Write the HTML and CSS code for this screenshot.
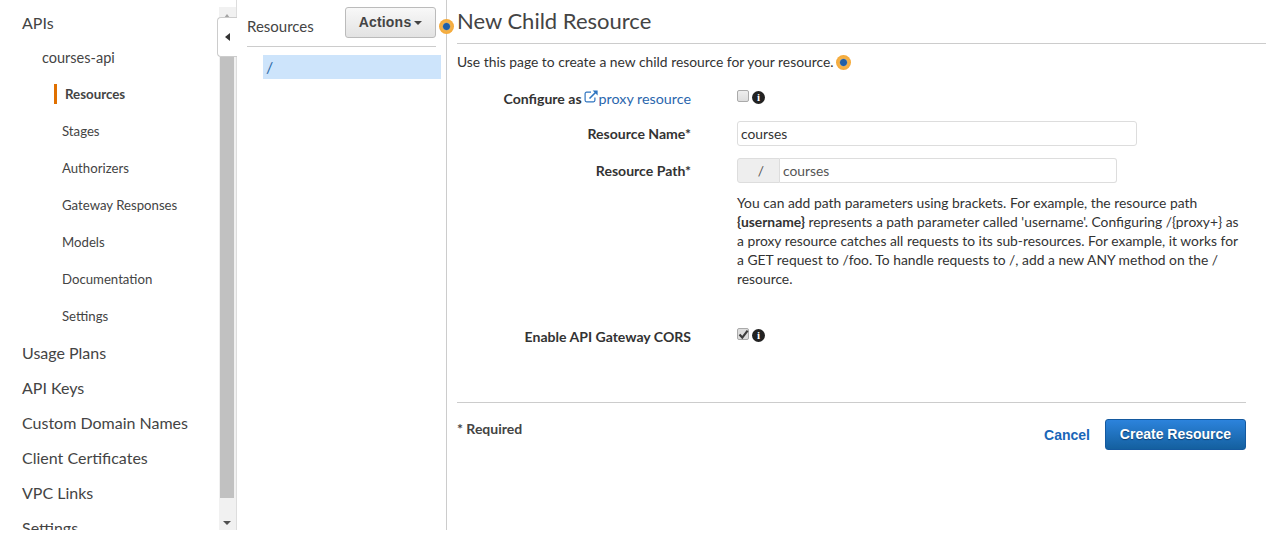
FILE: index.html
```html
<!DOCTYPE html>
<html lang="en">
<head>
<meta charset="utf-8">
<title>New Child Resource</title>
<link rel="stylesheet" href="styles.css">
</head>
<body>
<div class="app">
  <nav class="nav">
    <div class="nav-list">
      <a class="nav-top first">APIs</a>
      <a class="nav-api">courses-api</a>
      <a class="nav-sub active">Resources</a>
      <a class="nav-sub">Stages</a>
      <a class="nav-sub">Authorizers</a>
      <a class="nav-sub">Gateway Responses</a>
      <a class="nav-sub">Models</a>
      <a class="nav-sub">Documentation</a>
      <a class="nav-sub">Settings</a>
      <a class="nav-top">Usage Plans</a>
      <a class="nav-top">API Keys</a>
      <a class="nav-top">Custom Domain Names</a>
      <a class="nav-top">Client Certificates</a>
      <a class="nav-top">VPC Links</a>
      <a class="nav-top">Settings</a>
    </div>
    <div class="scrollbar">
      <div class="arrow-up"></div>
      <div class="thumb"></div>
      <div class="arrow-down"></div>
    </div>
    <button class="collapse" aria-label="Collapse"><span class="collapse-tri"></span></button>
  </nav>
  <section class="tree">
    <div class="tree-head">
      <span class="tree-title">Resources</span>
      <button class="actions">Actions<span class="caret"></span></button>
    </div>
    <div class="tree-row">/</div>
    <span class="dot dot-actions"></span>
  </section>
  <main class="main">
    <h1 class="title">New Child Resource</h1>
    <p class="intro">Use this page to create a new child resource for your resource.<span class="dot dot-inline"></span></p>
    <div class="row row-proxy">
      <div class="label normal">Configure as
        <svg class="ext" width="15" height="15" viewBox="0 0 15 15" fill="none" stroke="#2f74c0" stroke-width="1.2"><path d="M7 3.2H2.6a1.5 1.5 0 0 0-1.5 1.5v6.6a1.5 1.5 0 0 0 1.5 1.5h6.8a1.5 1.5 0 0 0 1.5-1.5V8.5"/><path d="M5.5 9.5 12 3" stroke-width="1.6"/><path d="M8.6 1.4h5v5z" fill="#2f74c0" stroke="none"/></svg><a class="link">proxy resource</a></div>
      <div class="field check-field"><span class="check"></span><span class="info">i</span></div>
    </div>
    <div class="row row-name">
      <div class="label">Resource Name*</div>
      <div class="field"><div class="input input-name">courses</div></div>
    </div>
    <div class="row row-path">
      <div class="label">Resource Path*</div>
      <div class="field">
        <div class="path-group"><span class="path-prefix">/</span><span class="path-input">courses</span></div>
      </div>
    </div>
    <p class="help">You can add path parameters using brackets. For example, the resource path <b>{username}</b> represents a path parameter called 'username'. Configuring /{proxy+} as a proxy resource catches all requests to its sub-resources. For example, it works for a GET request to /foo. To handle requests to /, add a new ANY method on the / resource.</p>
    <div class="row row-cors">
      <div class="label">Enable API Gateway CORS</div>
      <div class="field check-field"><span class="check checked"><svg width="13" height="13" viewBox="0 0 13 13"><path d="M2.5 6.5 5.3 9.6 10.6 2.6" fill="none" stroke="#3d3d3d" stroke-width="2.2"/></svg></span><span class="info">i</span></div>
    </div>
    <div class="footer">
      <span class="required">* Required</span>
      <div class="footer-actions">
        <a class="cancel">Cancel</a>
        <button class="create">Create Resource</button>
      </div>
    </div>
  </main>
</div>
</body>
</html>
```

FILE: styles.css
```css
* { box-sizing: border-box; }
html, body { margin: 0; padding: 0; height: 533px; overflow: hidden; background: #fff; }
body { font-family: Lato, "Liberation Sans", sans-serif; font-size: 13.85px; color: #333; }
.app { display: flex; height: 530px; }

.nav { position: relative; width: 237px; flex: none; display: flex; border-right: 1px solid #ddd; height: 530px; }
.nav-list { width: 219px; flex: none; height: 530px; overflow: hidden; padding-top: 5px; display: flex; flex-direction: column; }
.nav-list a { display: block; color: #444; white-space: nowrap; }
.nav-top { font-size: 16px; line-height: 35px; height: 35px; padding-left: 22px; flex: none; }
.nav-api { font-size: 14.5px; line-height: 35px; height: 35px; padding-left: 42px; flex: none; }
.nav-sub { font-size: 13.2px; line-height: 37px; height: 37px; padding-left: 62px; flex: none; }
.nav-list .active { font-weight: 700; font-size: 13.3px; padding-left: 11px; margin-left: 54px; margin-top: 1px; position: relative; }
.nav-list .active::before { content: ""; position: absolute; left: 0; top: 8px; width: 3px; height: 20px; background: #e07000; }

.scrollbar { width: 17px; flex: none; background: #f1f1f1; margin-top: 7px; position: relative; display: flex; flex-direction: column; }
.thumb { flex: 1; margin: 50px 2px 32px 1px; background: #c1c1c1; }
.arrow-up { position: absolute; top: 7px; left: 5px; border: 3.5px solid transparent; border-top: 0; border-bottom: 4px solid #a3a3a3; }
.arrow-down { position: absolute; bottom: 5px; left: 4px; border: 4px solid transparent; border-bottom: 0; border-top: 4px solid #505050; }
.collapse { position: absolute; left: 217px; top: 17px; width: 20px; height: 40px; padding: 0; background: #fff; border: 1px solid #ccc; border-right: 0; border-radius: 4px 0 0 4px; }
.collapse-tri { position: absolute; left: 7px; top: 15px; border: 4.5px solid transparent; border-left: 0; border-right: 5px solid #333; }

.tree { position: relative; width: 210px; flex: none; height: 530px; border-right: 1px solid #ccc; padding-top: 7px; }
.tree-head { display: flex; justify-content: space-between; align-items: flex-start; margin: 0 10px; height: 40px; border-bottom: 1px solid #ccc; }
.tree-title { font-size: 15px; color: #444; line-height: 20px; margin-top: 9px; }
.actions { width: 91px; height: 31px; padding: 0 0 2px; font-family: "Liberation Sans", sans-serif; font-size: 14px; font-weight: 700; letter-spacing: .2px; color: #444; border: 1px solid #bbb; border-radius: 3px; background: linear-gradient(#f8f8f8, #e3e3e3); }
.caret { display: inline-block; margin-left: 3px; vertical-align: 2px; border: 4px solid transparent; border-bottom: 0; border-top: 4px solid #444; }
.tree-row { margin: 8px 5px 0 26px; height: 24px; background: #cde4fb; color: #2f6ba8; font-size: 16px; line-height: 24px; padding-left: 3px; }

.dot { display: inline-block; width: 15px; height: 15px; border-radius: 50%; background: radial-gradient(circle, #1f5fa8 0 3px, #7b8fa0 3.6px, #f4b24a 4.2px, #f5a938 7.5px); }
.dot-actions { position: absolute; right: -8px; top: 19px; z-index: 2; }
.dot-inline { margin-left: 2px; vertical-align: -3px; }

.main { width: 809px; margin-left: 10px; flex: none; }
.title { margin: 0; height: 44px; font-size: 22px; font-weight: 400; line-height: 42px; color: #444; border-bottom: 1px solid #ccc; }
.intro { margin: 8px 0 0; line-height: 20px; color: #333; }
.row { display: flex; align-items: center; width: 789px; }
.label { width: 234px; flex: none; text-align: right; font-weight: 700; font-size: 14.05px; color: #333; white-space: nowrap; }
.label.normal { display: flex; justify-content: flex-end; align-items: center; }
.ext { margin: -3px 0 0 2px; }
.link { color: #2a66ad; font-weight: 400; font-size: 14.3px; }
.field { margin-left: 46px; flex: none; }
.row-proxy { margin-top: 14px; height: 24px; }
.row-name { margin-top: 11px; height: 25px; }
.row-path { margin-top: 12px; height: 25px; }
.check-field { display: flex; align-items: center; gap: 3px; margin-top: -4px; }
.check { display: inline-flex; width: 12px; height: 12px; border: 1px solid #aaa; border-radius: 2px; background: linear-gradient(#eee, #ddd); align-items: center; justify-content: center; }
.check svg { flex: none; }
.checked { background: #ddd; }
.info { display: inline-block; width: 13px; height: 13px; margin-top: 2px; border-radius: 50%; background: #222; color: #fff; font: 700 11px/13px "Liberation Serif", serif; text-align: center; }
.input { height: 25px; border: 1px solid #ddd; border-radius: 3px; padding-left: 3px; line-height: 23px; color: #333; }
.input-name { width: 400px; }
.path-group { display: flex; width: 380px; height: 25px; }
.path-prefix { width: 43px; flex: none; background: #eee; border: 1px solid #ddd; border-radius: 3px 0 0 3px; padding-left: 5px; text-align: center; line-height: 23px; color: #555; }
.path-input { flex: 1; border: 1px solid #ddd; border-left: 0; border-radius: 0 3px 3px 0; padding-left: 3px; line-height: 23px; color: #555; }
.help { margin: 10px 0 0 280px; width: 510px; line-height: 19px; color: #333; }
.help b { font-weight: 700; }
.row-cors { margin-top: 36px; height: 24px; }
.footer { margin-top: 54px; width: 789px; border-top: 1px solid #ccc; display: flex; justify-content: space-between; align-items: flex-start; }
.required { font-weight: 700; font-size: 14px; color: #444; margin-top: 16px; line-height: 20px; }
.footer-actions { display: flex; align-items: center; gap: 15px; margin-top: 16px; }
.cancel { color: #1a66b8; font: 700 14px "Liberation Sans", sans-serif; }
.create { width: 141px; height: 31px; padding: 0 0 1px; border: 1px solid #14599f; border-radius: 3px; background: linear-gradient(#2c83dc, #14609f); color: #fff; font: 700 14px "Liberation Sans", sans-serif; text-shadow: 0 1px 1px #0b3c6e; }
```
